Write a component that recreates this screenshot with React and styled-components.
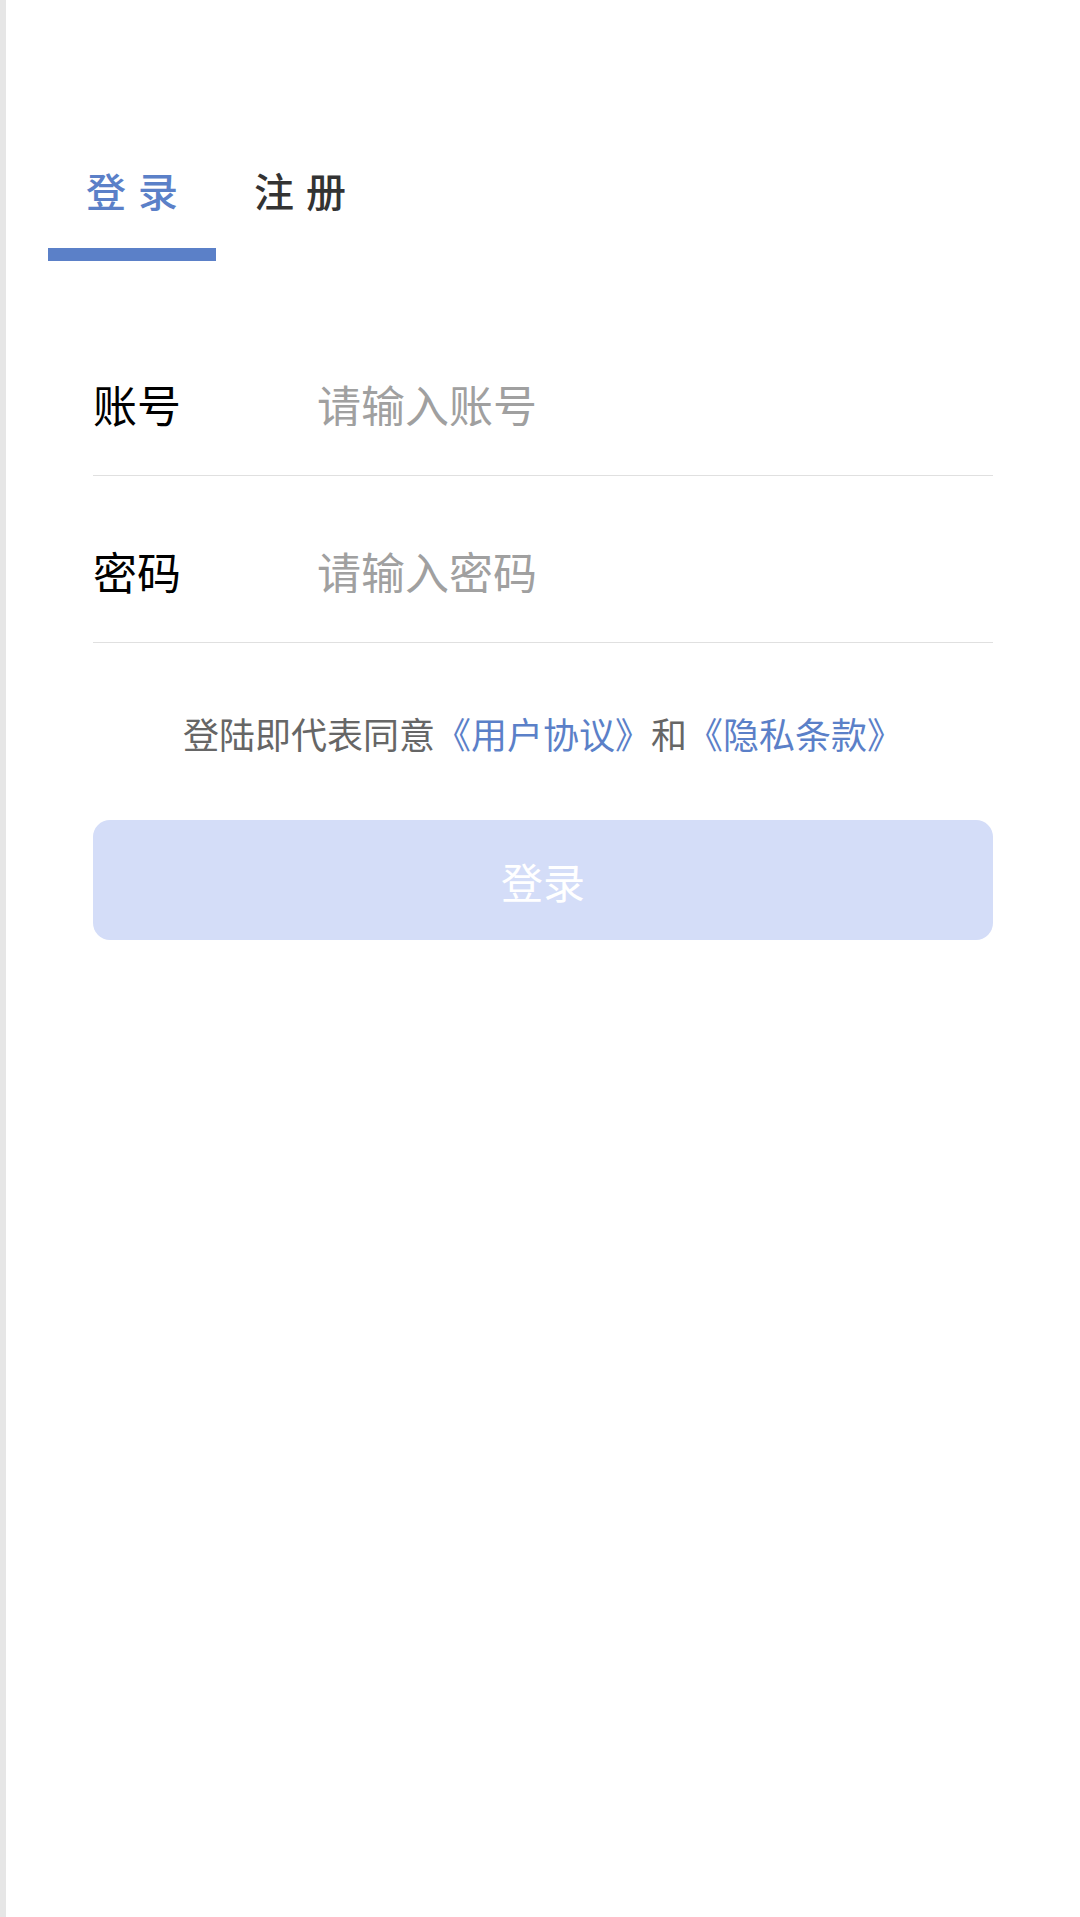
import styled, { createGlobalStyle } from "styled-components";
import { useState } from "react";

const GlobalStyle = createGlobalStyle`
    body {
        margin: 0;
        background: #ffffff;
        font-family: "Noto Sans CJK SC", "Noto Sans", sans-serif;
    }
`;

const App = () => {
    const [tab, setTab] = useState("login");

    return (
        <Page>
            <GlobalStyle />
            <Edge />
            <Main>
                <Tabs>
                    <Tab active={tab === "login"} onClick={() => setTab("login")}>登录</Tab>
                    <Tab active={tab === "register"} onClick={() => setTab("register")}>注册</Tab>
                </Tabs>
                <Form onSubmit={(e) => e.preventDefault()}>
                    <Row>
                        <Label>账号</Label>
                        <Input name="account" placeholder="请输入账号" />
                    </Row>
                    <Row>
                        <Label>密码</Label>
                        <Input name="password" type="password" placeholder="请输入密码" />
                    </Row>
                    <Terms>
                        登陆即代表同意<Link>《用户协议》</Link>和<Link>《隐私条款》</Link>
                    </Terms>
                    <Button type="submit">登录</Button>
                </Form>
            </Main>
        </Page>
    );
};

const Page = styled.div`
    display: flex;
    min-height: 1917px;
    background: #ffffff;
`;

const Edge = styled.div`
    width: 6px;
    flex-shrink: 0;
    background: #e6e6e6;
`;

const Main = styled.div`
    flex: 1;
    display: flex;
    flex-direction: column;
`;

const Tabs = styled.div`
    display: flex;
    padding: 170px 0 0 42px;
`;

const Tab = styled.div`
    width: 168px;
    box-sizing: border-box;
    padding-left: 12px;
    text-align: center;
    font-size: 40px;
    line-height: 40px;
    letter-spacing: 12px;
    font-weight: 500;
    color: ${({ active }) => (active ? "#5b80c8" : "#333333")};
    cursor: pointer;

    &::after {
        content: "";
        display: block;
        height: 13px;
        margin: 38px 0 0 -12px;
        background: ${({ active }) => (active ? "#5b80c8" : "transparent")};
    }
`;

const Form = styled.form`
    display: flex;
    flex-direction: column;
    margin: 48px 87px 0 87px;
`;

const Row = styled.div`
    display: flex;
    align-items: center;
    padding: 73px 0 49px;
    border-bottom: 1px solid #e0e0e0;
`;

const Label = styled.div`
    width: 224px;
    flex-shrink: 0;
    font-size: 44px;
    line-height: 44px;
    color: #000000;
`;

const Input = styled.input`
    flex: 1;
    min-width: 0;
    border: none;
    outline: none;
    padding: 0;
    font-family: inherit;
    font-size: 44px;
    line-height: 44px;
    height: 44px;
    color: #333333;
    background: transparent;

    &::placeholder {
        color: #a0a0a0;
    }
`;

const Terms = styled.div`
    margin-top: 72px;
    text-align: center;
    font-size: 36px;
    line-height: 36px;
    color: #666666;
`;

const Link = styled.span`
    color: #5b80c8;
`;

const Button = styled.button`
    margin-top: 69px;
    height: 120px;
    border: none;
    border-radius: 17px;
    background: #d4ddf8;
    color: #ffffff;
    font-family: inherit;
    font-size: 42px;
    cursor: pointer;
`;

export default App;
